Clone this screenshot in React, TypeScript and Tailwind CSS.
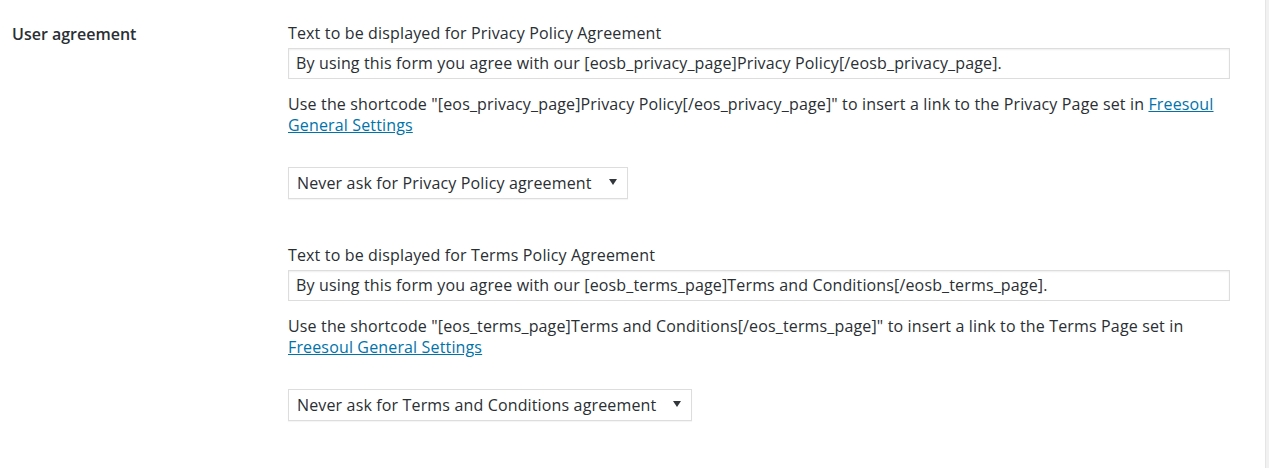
export default function App() {
  const font = { fontFamily: '"Open Sans", "Noto Sans", sans-serif' };
  return (
    <div className="flex min-h-[468px] w-full bg-[#f1f1f1]" style={font}>
      <div className="flex w-[1266px] border-r border-[#e5e5e5] bg-white text-[16px] leading-[21px] tracking-[0.15px] text-[#2a2f34]">
        <div className="w-[288px] shrink-0 pl-3 pt-[24px] font-semibold tracking-normal">User agreement</div>
        <div className="w-[942px] pt-[23px]">
          <Block
            label="Text to be displayed for Privacy Policy Agreement"
            value="By using this form you agree with our [eosb_privacy_page]Privacy Policy[/eosb_privacy_page]."
            desc={
              <>
                Use the shortcode "[eos_privacy_page]Privacy Policy[/eos_privacy_page]" to insert a link to the Privacy Page set in{" "}
                <a href="#" className="text-[#0073aa] underline">
                  Freesoul
                  <br />
                  General Settings
                </a>
              </>
            }
            option="Never ask for Privacy Policy agreement"
            selectWidth="w-[340px]"
          />
          <div className="h-[46px]" />
          <Block
            label="Text to be displayed for Terms Policy Agreement"
            value="By using this form you agree with our [eosb_terms_page]Terms and Conditions[/eosb_terms_page]."
            desc={
              <>
                Use the shortcode "[eos_terms_page]Terms and Conditions[/eos_terms_page]" to insert a link to the Terms Page set in
                <br />
                <a href="#" className="text-[#0073aa] underline">
                  Freesoul General Settings
                </a>
              </>
            }
            option="Never ask for Terms and Conditions agreement"
            selectWidth="w-[404px]"
          />
        </div>
      </div>
    </div>
  );
}

function Block({
  label,
  value,
  desc,
  option,
  selectWidth,
}: {
  label: string;
  value: string;
  desc: React.ReactNode;
  option: string;
  selectWidth: string;
}) {
  return (
    <div>
      <div className="whitespace-nowrap">{label}</div>
      <div className="mt-[4px] flex h-[31px] items-center whitespace-nowrap border border-[#dddddd] pl-[7px] shadow-[inset_0_1px_2px_rgba(0,0,0,0.07)]">
        {value}
      </div>
      <p className="mt-[15px] whitespace-nowrap">{desc}</p>
      <div
        className={`mt-[31px] flex h-[32px] items-center justify-between whitespace-nowrap border border-[#dddddd] pl-[8px] pr-[10px] shadow-[0_1px_1px_rgba(0,0,0,0.04)] ${selectWidth}`}
      >
        <span>{option}</span>
        <svg width="8" height="8" viewBox="0 0 8 8" className="mb-[2px]">
          <path d="M0 1h8L4 7z" fill="#32373c" />
        </svg>
      </div>
    </div>
  );
}
